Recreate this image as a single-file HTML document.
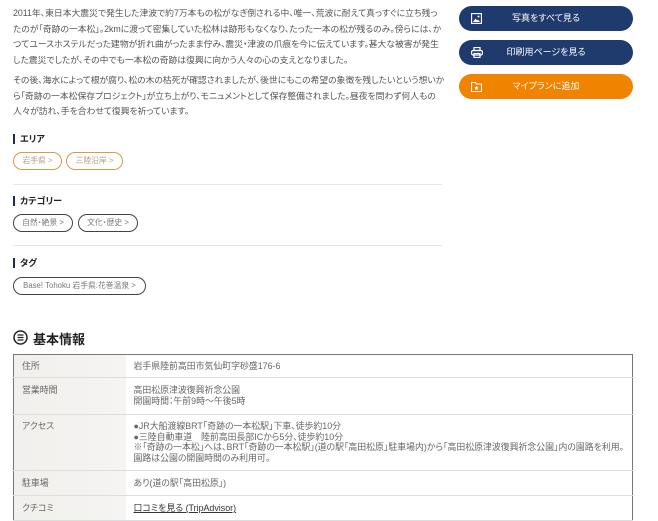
<!DOCTYPE html>
<html><head><meta charset="utf-8"><style>
*{margin:0;padding:0;box-sizing:border-box}
body{width:658px;height:517px;overflow:hidden;background:#fff;font-family:"Liberation Sans","Noto Sans CJK JP",sans-serif;color:#555;position:relative;font-feature-settings:"palt"}
.p{position:absolute;left:13px;width:445px;font-size:8.8px;line-height:15.5px;color:#555;white-space:nowrap}
.btn{position:absolute;left:459px;width:174px;height:25px;border-radius:13px;color:#fff;font-size:9px;line-height:25px;text-align:center}
.btn svg{position:absolute;left:12px;top:7px}
.h{position:absolute;left:13px;font-size:9px;font-weight:bold;color:#222;padding-left:7px;line-height:10px}
.h:before{content:"";position:absolute;left:0;top:0;width:2px;height:10px;background:#1e2a55}
.chip{position:absolute;height:18px;border:1px solid #444;border-radius:9px;font-size:7.8px;line-height:16px;color:#777;white-space:nowrap;text-align:center}
.chip.o{border-color:#d99a4a;color:#b49b85}
.hr{position:absolute;left:13px;width:429px;height:1px;background:#e8e8e8}
table{position:absolute;left:13px;top:354px;width:620px;border-collapse:collapse;border:1px solid #777;font-size:8.9px;color:#666}
td{border-bottom:1px solid #ddd;padding:0 8px;vertical-align:top;line-height:10.5px;white-space:nowrap}
td.l{width:113px;background:linear-gradient(90deg,#f2f0ed,#f6f4f2)}
</style></head><body>
<div class="p" style="top:6px">2011年、東日本大震災で発生した津波で約7万本もの松がなぎ倒される中、唯一、荒波に耐えて真っすぐに立ち残っ<br>たのが「奇跡の一本松」。2kmに渡って密集していた松林は跡形もなくなり、たった一本の松が残るのみ。傍らには、か<br>つてユースホステルだった建物が折れ曲がったまま佇み、震災・津波の爪痕を今に伝えています。甚大な被害が発生<br>した震災でしたが、その中でも一本松の奇跡は復興に向かう人々の心の支えとなりました。</div>
<div class="p" style="top:73px">その後、海水によって根が腐り、松の木の枯死が確認されましたが、後世にもこの希望の象徴を残したいという想いか<br>ら「奇跡の一本松保存プロジェクト」が立ち上がり、モニュメントとして保存整備されました。昼夜を問わず何人もの<br>人々が訪れ、手を合わせて復興を祈っています。</div>

<div class="btn" style="top:6px;background:#1f3a6d"><svg width="11" height="11" viewBox="0 0 11 11"><rect x="0.5" y="0.5" width="10" height="10" fill="none" stroke="#fff" stroke-width="1.3"/><path d="M2 9 L4.5 5.5 L6 7.5 L7 6.5 L9 9Z" fill="#fff"/><circle cx="7.5" cy="3.5" r="1" fill="#fff"/></svg>写真をすべて見る</div>
<div class="btn" style="top:40px;background:#1f3a6d"><svg width="12" height="11" viewBox="0 0 12 11"><rect x="3" y="0.5" width="6" height="3" fill="none" stroke="#fff" stroke-width="1.2"/><rect x="0.6" y="3.5" width="10.8" height="4.5" rx="1.5" fill="none" stroke="#fff" stroke-width="1.2"/><rect x="3" y="6.5" width="6" height="4" fill="none" stroke="#fff" stroke-width="1.2"/></svg>印刷用ページを見る</div>
<div class="btn" style="top:74px;background:#f08300"><svg width="11" height="11" viewBox="0 0 11 11"><path d="M0.5 1.5h4l1 1.5h5v7.5h-10z" fill="none" stroke="#fff" stroke-width="1.1"/><path d="M5.5 4.8l.7 1.4 1.5.2-1.1 1 .3 1.5-1.4-.7-1.4.7.3-1.5-1.1-1 1.5-.2z" fill="#fff"/></svg>マイプランに追加</div>

<div class="h" style="top:134px">エリア</div>
<div class="chip o" style="left:13px;top:152px;width:49px">岩手県 &gt;</div>
<div class="chip o" style="left:66px;top:152px;width:57px">三陸沿岸 &gt;</div>
<div class="hr" style="top:184px"></div>
<div class="h" style="top:196px">カテゴリー</div>
<div class="chip" style="left:13px;top:214px;width:60px">自然・絶景 &gt;</div>
<div class="chip" style="left:78px;top:214px;width:60px">文化・歴史 &gt;</div>
<div class="hr" style="top:245px"></div>
<div class="h" style="top:258px">タグ</div>
<div class="chip" style="left:13px;top:277px;width:133px">Base! Tohoku 岩手県:花巻温泉 &gt;</div>

<svg style="position:absolute;left:13px;top:330px" width="15" height="15" viewBox="0 0 15 15"><circle cx="7.5" cy="7.5" r="6.5" fill="none" stroke="#222" stroke-width="1.5"/><path d="M4.5 5h6M4.5 7.5h6M4.5 10h6" stroke="#222" stroke-width="1.3"/></svg>
<div style="position:absolute;left:33px;top:329px;font-size:13px;font-weight:bold;color:#222">基本情報</div>

<table>
<tr style="height:23px"><td class="l" style="padding-top:6px">住所</td><td style="padding-top:6px">岩手県陸前高田市気仙町字砂盛176-6</td></tr>
<tr style="height:37px"><td class="l" style="padding-top:7px">営業時間</td><td style="padding-top:7px">高田松原津波復興祈念公園<br>開園時間：午前9時～午後5時</td></tr>
<tr style="height:56px"><td class="l" style="padding-top:6px">アクセス</td><td style="padding-top:6px">●JR大船渡線BRT「奇跡の一本松駅」下車、徒歩約10分<br>●三陸自動車道　陸前高田長部ICから5分、徒歩約10分<br>※「奇跡の一本松」へは、BRT「奇跡の一本松駅」(道の駅「高田松原」駐車場内)から「高田松原津波復興祈念公園」内の園路を利用。<br>園路は公園の開園時間のみ利用可。</td></tr>
<tr style="height:25px"><td class="l" style="padding-top:7px">駐車場</td><td style="padding-top:7px">あり(道の駅「高田松原」)</td></tr>
<tr style="height:25px"><td class="l" style="padding-top:7px">クチコミ</td><td style="padding-top:7px"><span style="text-decoration:underline;color:#333">口コミを見る (TripAdvisor)</span></td></tr>
</table>
</body></html>
